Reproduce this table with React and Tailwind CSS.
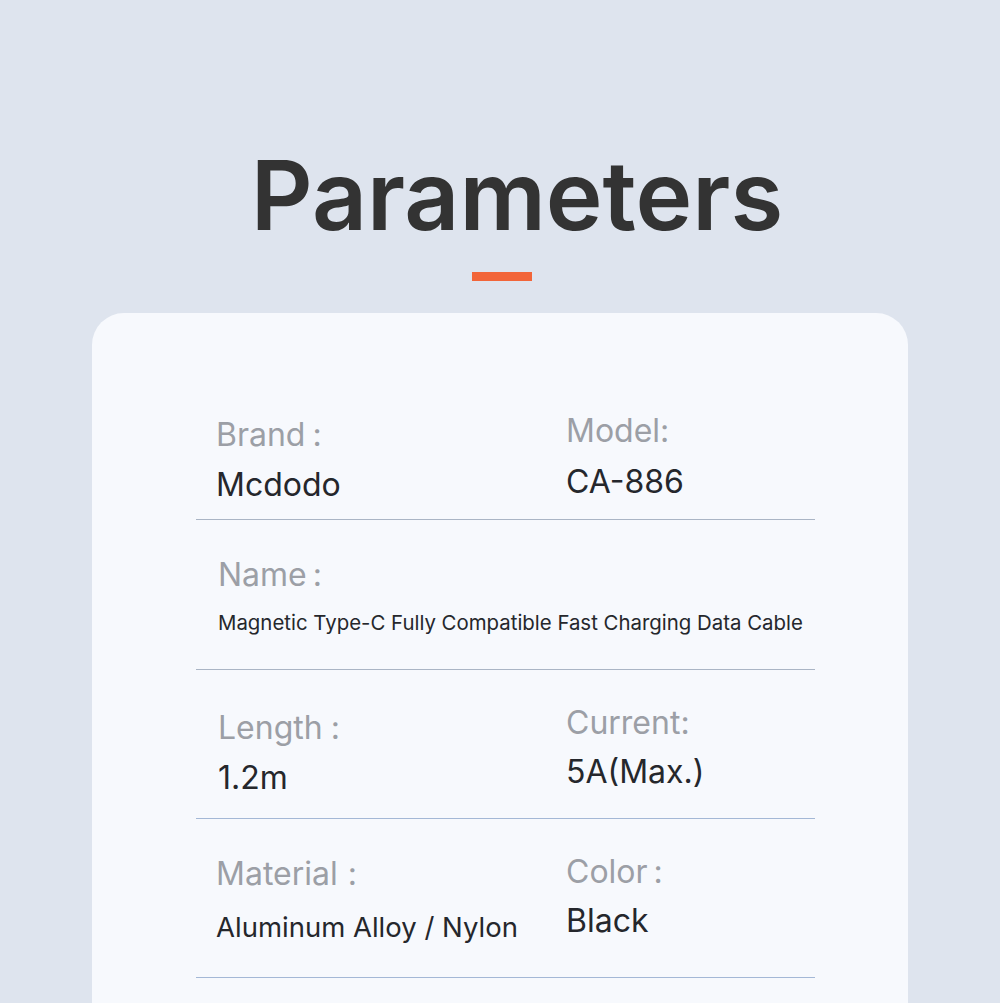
const font = { fontFamily: 'Inter, "Noto Sans", sans-serif' };

function Label({ children, className = '' }) {
    return (
        <div className={`text-[32px] leading-[40px] text-[#9c9fa6] ${className}`}>
            {children}
        </div>
    );
}

function Value({ children, className = '' }) {
    return (
        <div className={`text-[#25272c] ${className}`}>
            {children}
        </div>
    );
}

export default function App() {
    return (
        <div className="h-[1003px] overflow-hidden bg-[#dee4ee]" style={font}>
            <div className="pt-[147px] flex flex-col items-center">
                <h1 className="pl-[34px] text-[96px] leading-[96px] font-semibold text-[#333333]">
                    Parameters
                </h1>
                <div className="ml-[4px] mt-[29px] h-[9px] w-[60px] bg-[#f26539]" />
            </div>

            <div className="mx-auto mt-[32px] w-[816px] rounded-t-[32px] bg-[#f7f9fd] pt-[102px] pb-[80px]">
                <div className="ml-[104px] w-[619px]">
                    <section className="grid grid-cols-[350px_1fr] border-b border-[#aab5c5] pl-[20px] pb-[14px]">
                        <div>
                            <Label>Brand<span className="ml-[7px]">:</span></Label>
                            <Value className="mt-[10px] text-[32px] leading-[40px]">Mcdodo</Value>
                        </div>
                        <div className="-mt-[4px]">
                            <Label>Model:</Label>
                            <Value className="mt-[11px] text-[32px] leading-[40px]">CA-886</Value>
                        </div>
                    </section>

                    <section className="border-b border-[#aab5c5] pl-[22px] pt-[35px] pb-[32px]">
                        <Label>Name<span className="ml-[6px]">:</span></Label>
                        <Value className="mt-[14px] text-[20.4px] leading-[28px]">
                            Magnetic Type-C Fully Compatible Fast Charging Data Cable
                        </Value>
                    </section>

                    <section className="grid grid-cols-[348px_1fr] border-b border-[#a4b8d6] pl-[22px] pt-[38px] pb-[20px]">
                        <div>
                            <Label>Length<span className="ml-[8px]">:</span></Label>
                            <Value className="mt-[10px] text-[32px] leading-[40px]">1.2m</Value>
                        </div>
                        <div className="-mt-[5px]">
                            <Label>Current:</Label>
                            <Value className="mt-[9px] text-[32px] leading-[40px]">5A(Max.)</Value>
                        </div>
                    </section>

                    <section className="grid grid-cols-[350px_1fr] border-b border-[#a4b8d6] pl-[20px] pt-[35px] pb-[34px]">
                        <div>
                            <Label>Material<span className="ml-[10px]">:</span></Label>
                            <Value className="mt-[17px] text-[27.5px] leading-[32px]">Aluminum Alloy / Nylon</Value>
                        </div>
                        <div className="-mt-[2px]">
                            <Label>Color<span className="ml-[6px]">:</span></Label>
                            <Value className="mt-[9px] text-[32px] leading-[40px]">Black</Value>
                        </div>
                    </section>
                </div>
            </div>
        </div>
    );
}
